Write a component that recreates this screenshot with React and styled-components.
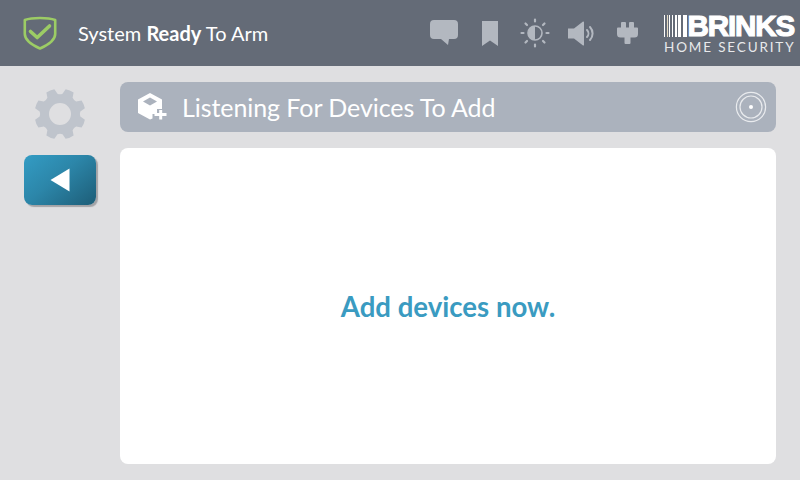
import React from "react";
import styled, { createGlobalStyle } from "styled-components";

const Global = createGlobalStyle`
  html, body { margin: 0; padding: 0; }
  body { width: 800px; height: 480px; overflow: hidden; background: #dfdfe1; font-family: Lato, "Open Sans", sans-serif; }
`;
const Screen = styled.div`
  width: 800px; height: 480px; display: flex; flex-direction: column; background: #dfdfe1;
`;
const Header = styled.header`
  height: 66px; flex: none; background: #646b77; display: flex; align-items: center; padding: 0 6px 0 23px; box-sizing: border-box;
`;
const Status = styled.div`
  display: flex; align-items: center; gap: 21px; flex: 1; color: #fff; font-size: 20px; line-height: 24px; white-space: nowrap;
  b { font-weight: 700; }
`;
const Tray = styled.div`
  display: flex; align-items: center; margin-right: 26px; height: 66px;
`;
const TraySlot = styled.div`
  display: flex; margin-left: ${p => p.$gap || 0}px;
`;
const Logo = styled.div`
  width: 130px; display: flex; flex-direction: column; color: #fff; margin-top: 2px;
`;
const LogoTop = styled.div`
  display: flex; align-items: center; height: 22px;
`;
const LogoName = styled.span`
  font-family: "Liberation Sans", Arial, sans-serif; font-weight: 700; font-size: 29.5px; line-height: 22px; letter-spacing: -1.1px;
  -webkit-text-stroke: 1.2px #fff; white-space: nowrap;
`;
const LogoSub = styled.span`
  font-size: 13.5px; line-height: 14px; letter-spacing: 1.85px; color: #e8e9eb; font-weight: 400; white-space: nowrap; margin-top: 3px;
`;
const Body = styled.div`
  flex: 1; display: flex; min-height: 0;
`;
const Side = styled.aside`
  width: 120px; flex: none; display: flex; flex-direction: column; align-items: center; padding-top: 22px; box-sizing: border-box;
`;
const BackButton = styled.button`
  width: 72px; height: 50px; margin-top: 15px; border: 0; border-radius: 8px; padding: 0; display: flex; align-items: center; justify-content: center;
  background: linear-gradient(140deg, #339cc4 0%, #2c86a9 45%, #1d5d77 100%);
  box-shadow: 2px 2px 1px rgba(90, 90, 95, 0.45);
`;
const Main = styled.main`
  width: 656px; flex: none; display: flex; flex-direction: column; padding-top: 16px; gap: 16px;
`;
const TitleBar = styled.div`
  height: 50px; flex: none; background: #abb2bd; border-radius: 8px; display: flex; align-items: center; padding: 0 9px 0 16px; box-sizing: border-box; color: #fff;
`;
const Title = styled.h1`
  flex: 1; margin: 0 0 0 14px; font-size: 25px; font-weight: 400; line-height: 30px; letter-spacing: -0.07px; white-space: nowrap;
`;
const Panel = styled.section`
  height: 316px; flex: none; background: #fff; border-radius: 8px; display: flex; align-items: center; justify-content: center;
`;
const Message = styled.p`
  margin: 2px 0 0; color: #3a9bc1; font-size: 27.6px; font-weight: 700; line-height: 32px;
`;
const Stripes = styled.div`
  display: flex; gap: 1.5px; height: 22px; margin-right: 1px; flex: none;
`;
const Stripe = styled.i`
  display: block; height: 100%; width: ${p => p.$w}px; background: ${p => p.$c || "#fff"};
`;

const gearPath = (() => {
  const cx = 26, cy = 26, out = 25.5, root = 20.5, n = 8;
  const step = (Math.PI * 2) / n;
  const pt = (r, a) => `${(cx + r * Math.cos(a)).toFixed(2)} ${(cy + r * Math.sin(a)).toFixed(2)}`;
  let d = "";
  for (let i = 0; i < n; i++) {
    const a = step * i + step / 2;
    const s = i === 0 ? "M" : "L";
    d += `${s}${pt(root, a - 0.27)} L${pt(out, a - 0.17)} Q${pt(out + 0.6, a)} ${pt(out, a + 0.17)} L${pt(root, a + 0.27)} Q${pt(root - 1.2, a + step / 2)} ${pt(root, a + step - 0.27)} `;
  }
  return d + "Z";
})();

const Shield = () => (
  <svg width="34" height="34" viewBox="0 0 34 34" fill="none">
    <path d="M17 2 C23 2 28 2.5 32.2 4 L32.2 18 C32.2 24 25 29 17 32.5 C9 29 1.8 24 1.8 18 L1.8 4 C6 2.5 11 2 17 2 Z" stroke="#9ccc65" strokeWidth="2.6" strokeLinejoin="round" />
    <path d="M7.5 15.5 L14.2 21.5 L26.5 10" stroke="#9ccc65" strokeWidth="3.6" strokeLinecap="round" strokeLinejoin="round" />
  </svg>
);
const Chat = () => (
  <svg width="28" height="26" viewBox="0 0 28 26" fill="#b3b8c0">
    <path d="M4 0 H24 A4 4 0 0 1 28 4 V15 A4 4 0 0 1 24 19 H19 L18 25 L11 19 H4 A4 4 0 0 1 0 15 V4 A4 4 0 0 1 4 0 Z" />
  </svg>
);
const Bookmark = () => (
  <svg width="16" height="25" viewBox="0 0 16 25" fill="#b3b8c0"><path d="M0 0 H16 V25 L8 19.5 L0 25 Z" /></svg>
);
const Brightness = () => (
  <svg width="30" height="30" viewBox="0 0 30 30" fill="none" stroke="#b3b8c0">
    <circle cx="15" cy="15" r="7" strokeWidth="1.6" />
    <path d="M15 8 A7 7 0 0 0 15 22 Z" fill="#b3b8c0" stroke="none" />
    <g strokeWidth="2.2" strokeLinecap="round">
      <path d="M15 1.5 V3.5 M15 26.5 V28.5 M1.5 15 H3.5 M26.5 15 H28.5 M5.5 5.5 L7 7 M23 23 L24.5 24.5 M5.5 24.5 L7 23 M23 7 L24.5 5.5" />
    </g>
  </svg>
);
const Speaker = () => (
  <svg width="27" height="25" viewBox="0 0 27 25" fill="none">
    <path d="M0 7.5 H6 L15 0.5 A0.8 0.8 0 0 1 16 1 V24 A0.8 0.8 0 0 1 15 24.5 L6 17.5 H0 Z" fill="#b3b8c0" />
    <path d="M19 9 A5 5 0 0 1 19 16" stroke="#b3b8c0" strokeWidth="2" strokeLinecap="round" />
    <path d="M22 6 A9.5 9.5 0 0 1 22 19" stroke="#b3b8c0" strokeWidth="2" strokeLinecap="round" />
  </svg>
);
const Plug = () => (
  <svg width="21" height="22" viewBox="0 0 21 22" fill="#b3b8c0">
    <path d="M4 1 A1 1 0 0 1 5 0 H8 A1 1 0 0 1 9 1 V5.5 H12 V1 A1 1 0 0 1 13 0 H16 A1 1 0 0 1 17 1 V5.5 H20 A1 1 0 0 1 21 6.5 V12 A3.5 3.5 0 0 1 17.5 15.5 H13.5 V21 A1 1 0 0 1 12.5 22 H8.5 A1 1 0 0 1 7.5 21 V15.5 H3.5 A3.5 3.5 0 0 1 0 12 V6.5 A1 1 0 0 1 1 5.5 H4 Z" />
  </svg>
);
const Gear = () => (
  <svg width="52" height="52" viewBox="0 0 52 52">
    <path fillRule="evenodd" fill="#bfc4cc" d={`${gearPath} M37 26 A11 11 0 1 0 15 26 A11 11 0 1 0 37 26 Z`} />
  </svg>
);
const Back = () => (
  <svg width="20" height="24" viewBox="0 0 20 24"><path d="M0.5 12 L19.5 0.5 V23.5 Z" fill="#fff" /></svg>
);
const Cube = () => (
  <svg width="32" height="30" viewBox="0 0 32 30">
    <path fill="#fff" d="M14 1 L26 7.5 V17 H21 V22 H16.5 V26.5 L14 27.5 L2 21 V7.5 Z" />
    <path fill="#abb2bd" d="M14 5.5 L21 9.5 L14 13.5 L7 9.5 Z" />
    <path fill="#fff" d="M23.2 18 H26.2 V21 H30.5 V24 H26.2 V27.5 H23.2 V24 H18.5 V21 H23.2 Z" />
  </svg>
);
const Target = () => (
  <svg width="32" height="32" viewBox="0 0 32 32" fill="none" stroke="#e9ebee" strokeWidth="1.2">
    <circle cx="16" cy="16" r="14.6" />
    <circle cx="16" cy="16" r="11" />
    <circle cx="16" cy="16" r="2" fill="#fff" stroke="none" />
  </svg>
);

export default function App() {
  return (
    <Screen>
      <Global />
      <Header>
        <Status>
          <Shield />
          <span>System <b>Ready</b> To Arm</span>
        </Status>
        <Tray>
          <TraySlot><Chat /></TraySlot>
          <TraySlot $gap={24}><Bookmark /></TraySlot>
          <TraySlot $gap={22}><Brightness /></TraySlot>
          <TraySlot $gap={18}><Speaker /></TraySlot>
          <TraySlot $gap={22}><Plug /></TraySlot>
        </Tray>
        <Logo>
          <LogoTop>
            <Stripes>
              <Stripe $w={1} /><Stripe $w={1} $c="#e6dcc4" /><Stripe $w={1} /><Stripe $w={1.5} /><Stripe $w={2} /><Stripe $w={3} /><Stripe $w={4} />
            </Stripes>
            <LogoName>BRINKS</LogoName>
          </LogoTop>
          <LogoSub>HOME SECURITY</LogoSub>
        </Logo>
      </Header>
      <Body>
        <Side>
          <Gear />
          <BackButton aria-label="Back"><Back /></BackButton>
        </Side>
        <Main>
          <TitleBar>
            <Cube />
            <Title>Listening For Devices To Add</Title>
            <Target />
          </TitleBar>
          <Panel><Message>Add devices now.</Message></Panel>
        </Main>
      </Body>
    </Screen>
  );
}
